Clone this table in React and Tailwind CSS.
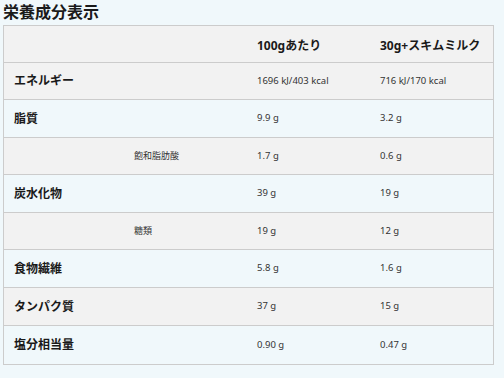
import React from 'react';

const rows = [
  { label: 'エネルギー', a: '1696 kJ/403 kcal', b: '716 kJ/170 kcal', gray: true, h: 'h-[37px]' },
  { label: '脂質', a: '9.9 g', b: '3.2 g', gray: false, h: 'h-[38px]' },
  { label: '飽和脂肪酸', a: '1.7 g', b: '0.6 g', gray: true, sub: true, h: 'h-[37px]' },
  { label: '炭水化物', a: '39 g', b: '19 g', gray: false, h: 'h-[38px]' },
  { label: '糖類', a: '19 g', b: '12 g', gray: true, sub: true, h: 'h-[37px]' },
  { label: '食物繊維', a: '5.8 g', b: '1.6 g', gray: false, h: 'h-[38px]' },
  { label: 'タンパク質', a: '37 g', b: '15 g', gray: true, h: 'h-[38px]' },
  { label: '塩分相当量', a: '0.90 g', b: '0.47 g', gray: false, h: 'h-[38px]' },
];

const font = { fontFamily: '"Noto Sans", "Noto Sans CJK JP", sans-serif' };

export default function App() {
  return (
    <div className="w-[504px] h-[378px] bg-[#f0f8fb] text-[#1a1a1a]" style={font}>
      <h2 className="h-[25px] pl-[3px] flex items-center text-[16px] font-bold leading-none pb-[2px]">
        栄養成分表示
      </h2>
      <div className="ml-[3px] w-[491px] border border-[#cccccc]">
        <div className="grid grid-cols-[243px_123px_1fr] h-[37px] bg-[#f2f2f2] border-b border-[#cccccc] items-center text-[12px] font-bold pt-[4px]">
          <div />
          <div className="pl-[10px]">100gあたり</div>
          <div className="pl-[10px]">30g+スキムミルク</div>
        </div>
        {rows.map((r, i) => (
          <div
            key={r.label}
            className={`grid grid-cols-[243px_123px_1fr] items-center ${r.h} ${r.gray ? 'bg-[#f2f2f2]' : ''} ${i < rows.length - 1 ? 'border-b border-[#cccccc]' : ''}`}
          >
            {r.sub ? (
              <div className="pl-[130px] text-[9px] text-[#333333]">{r.label}</div>
            ) : (
              <div className="pl-[10px] text-[12px] font-bold">{r.label}</div>
            )}
            <div className="pl-[10px] text-[9.5px] text-[#333333]">{r.a}</div>
            <div className="pl-[10px] text-[9.5px] text-[#333333]">{r.b}</div>
          </div>
        ))}
      </div>
    </div>
  );
}
